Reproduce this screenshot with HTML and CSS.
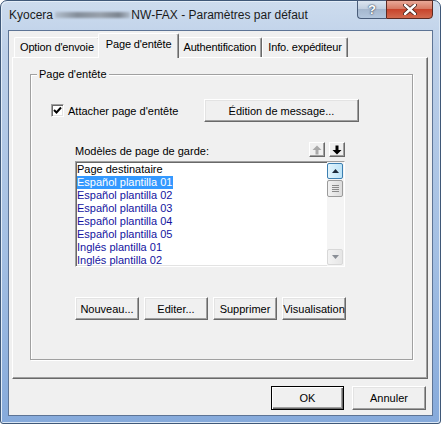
FILE: index.html
```html
<!DOCTYPE html>
<html lang="fr">

<head>
    <meta charset="UTF-8">
    <meta name="viewport" content="width=device-width, initial-scale=1.0">
    <title>Paramètres par défaut</title>
    <link rel="stylesheet" href="styles.css">
</head>

<body>
    <div class="window">
        <div class="titlebar">
            <div class="title">Kyocera <span class="blurred"></span>NW-FAX - Paramètres par défaut</div>
            <div class="caption-btns">
                <span class="cap help">?</span>
                <span class="cap close">
                    <svg width="14" height="11" viewBox="0 0 14 11">
                        <path d="M2 1 L12 10 M12 1 L2 10" stroke="#3b1a14" stroke-width="4" stroke-linecap="round" />
                        <path d="M2 1 L12 10 M12 1 L2 10" stroke="#fff" stroke-width="2.4" stroke-linecap="round" />
                    </svg>
                </span>
            </div>
        </div>

        <div class="client">
            <div class="tabs">
                <div class="tab">Option d'envoie</div>
                <div class="tab active">Page d'entête</div>
                <div class="tab">Authentification</div>
                <div class="tab">Info. expéditeur</div>
            </div>

            <div class="panel">
                <div class="group">
                    <span class="legend">Page d'entête</span>

                    <div class="attach-row">
                        <label class="check">
                            <span class="box">
                                <svg width="9" height="9" viewBox="0 0 9 9">
                                    <path d="M1 4 L3.5 6.5 L8 1.5" fill="none" stroke="#000" stroke-width="2" />
                                </svg>
                            </span>
                            Attacher page d'entête
                        </label>
                        <button class="btn btn-edit" type="button">Édition de message...</button>
                    </div>

                    <div class="list-head">
                        <span>Modèles de page de garde:</span>
                        <span class="move-btns">
                            <span class="move-btn">
                                <svg width="10" height="10" viewBox="0 0 10 10">
                                    <path d="M5 0.5 L9.5 5 L6.5 5 L6.5 9.5 L3.5 9.5 L3.5 5 L0.5 5 Z" fill="#a9a9a9" />
                                </svg>
                            </span>
                            <span class="move-btn">
                                <svg width="10" height="10" viewBox="0 0 10 10">
                                    <path d="M3.5 0.5 L6.5 0.5 L6.5 5 L9.5 5 L5 9.5 L0.5 5 L3.5 5 Z" fill="#000" />
                                </svg>
                            </span>
                        </span>
                    </div>

                    <div class="listbox">
                        <ul class="items">
                            <li class="first">Page destinataire</li>
                            <li><span class="selected">Español plantilla 01</span></li>
                            <li>Español plantilla 02</li>
                            <li>Español plantilla 03</li>
                            <li>Español plantilla 04</li>
                            <li>Español plantilla 05</li>
                            <li>Inglés plantilla 01</li>
                            <li>Inglés plantilla 02</li>
                        </ul>
                        <div class="scrollbar">
                            <span class="sb-btn hover">
                                <svg width="7" height="4" viewBox="0 0 7 4"><path d="M0 4 L3.5 0 L7 4 Z" fill="#1b2a3a" /></svg>
                            </span>
                            <span class="sb-thumb">
                                <i></i><i></i><i></i><i></i>
                            </span>
                            <span class="sb-track"></span>
                            <span class="sb-btn">
                                <svg width="7" height="4" viewBox="0 0 7 4"><path d="M0 0 L7 0 L3.5 4 Z" fill="#8a8f96" /></svg>
                            </span>
                        </div>
                    </div>

                    <div class="list-actions">
                        <button class="btn" type="button">Nouveau...</button>
                        <button class="btn" type="button">Editer...</button>
                        <button class="btn" type="button">Supprimer</button>
                        <button class="btn" type="button">Visualisation</button>
                    </div>
                </div>
            </div>

            <div class="footer">
                <button class="btn default" type="button">OK</button>
                <button class="btn" type="button">Annuler</button>
            </div>
        </div>
    </div>
</body>

</html>
```

FILE: styles.css
```css
* {
    margin: 0;
    padding: 0;
    box-sizing: border-box;
}

body {
    background-color: #fff;
    font-family: "Liberation Sans", Arial, sans-serif;
    font-size: 11px;
    color: #000;
}

/* window frame */

.window {
    width: 441px;
    height: 424px;
    display: flex;
    flex-direction: column;
    border: 1px solid #3f5878;
    border-radius: 7px 7px 3px 3px;
    background: linear-gradient(#cddcee, #bccfe8 12%, #a3bfe3 60%, #86aadb);
    box-shadow: inset 1px 1px 0 #e3edf8, inset -1px -1px 0 #dbe7f5;
}

.titlebar {
    height: 29px;
    display: flex;
    justify-content: space-between;
    align-items: flex-start;
}

.title {
    padding-left: 8px;
    padding-top: 7px;
    font-size: 12px;
    color: #1b1b1b;
    white-space: nowrap;
}

.blurred {
    display: inline-block;
    width: 75px;
    height: 6px;
    margin: 0 1px 2px -1px;
    vertical-align: middle;
    background: linear-gradient(90deg, #b3bfcd, #848e9a 30%, #98a1ac 60%, #7c8590 85%, #b0bccb);
    filter: blur(1px);
}

.caption-btns {
    display: flex;
    margin-top: -1px;
    margin-right: 7px;
}

.cap {
    height: 19px;
    display: flex;
    align-items: center;
    justify-content: center;
    border: 1px solid #4a5d7a;
}

.help {
    width: 29px;
    border-right: none;
    border-radius: 0 0 0 4px;
    background: linear-gradient(#dce5f0, #c1cfe0 45%, #a5b7ce 50%, #b3c6dd);
    color: #fff;
    font-weight: bold;
    font-size: 13px;
    text-shadow: 0 0 2px #2b3b55, 0 0 1px #2b3b55;
}

.close {
    width: 47px;
    border-color: #5c2a22;
    border-radius: 0 0 4px 0;
    background: linear-gradient(#e9a898, #d77a64 45%, #c8442c 50%, #d26a4f);
}

/* client */

.client {
    flex: 1;
    margin: 0 7px 7px 7px;
    background-color: #f0f0f0;
    border: 1px solid #5d7495;
}

.tabs {
    display: flex;
    align-items: flex-end;
    height: 24px;
    margin: 2px 0 0 5px;
}

.tab {
    height: 20px;
    padding: 3px 5px 0 5px;
    white-space: nowrap;
    letter-spacing: -0.15px;
    border-top: 1px solid #fff;
    border-left: 1px solid #fff;
    border-right: 1px solid #696969;
    border-radius: 2px 2px 0 0;
    box-shadow: inset -1px 0 0 #a0a0a0;
    background-color: #f0f0f0;
}

.tab.active {
    position: relative;
    z-index: 1;
    height: 25px;
    margin: 0 -2px -1px -2px;
    padding: 4px 7px 0 7px;
}

.panel {
    width: 416px;
    height: 322px;
    margin-left: 3px;
    padding: 16px 0 0 17px;
    border-top: 1px solid #fff;
    border-left: 1px solid #fff;
    border-right: 1px solid #696969;
    border-bottom: 1px solid #696969;
    box-shadow: inset -1px -1px 0 #a0a0a0;
}

/* group box */

.group {
    position: relative;
    width: 383px;
    height: 286px;
    border: 1px solid #a0a0a0;
    box-shadow: 1px 1px 0 #fff, inset 1px 1px 0 #fff;
}

.legend {
    position: absolute;
    top: -8px;
    left: 6px;
    padding: 0 2px;
    line-height: 14px;
    background-color: #f0f0f0;
}

.attach-row {
    display: flex;
    align-items: center;
    height: 23px;
    margin-top: 24px;
    padding-left: 20px;
    padding-right: 53px;
}

.check {
    display: flex;
    align-items: center;
    gap: 4px;
}

.box {
    width: 13px;
    height: 13px;
    display: flex;
    align-items: center;
    justify-content: center;
    background-color: #fff;
    border-top: 1px solid #a0a0a0;
    border-left: 1px solid #a0a0a0;
    border-right: 1px solid #fff;
    border-bottom: 1px solid #fff;
    box-shadow: inset 1px 1px 0 #696969, inset -1px -1px 0 #e3e3e3;
}

.btn {
    height: 23px;
    font-family: "Liberation Sans", Arial, sans-serif;
    font-size: 11px;
    color: #000;
    background-color: #f0f0f0;
    border-top: 1px solid #fff;
    border-left: 1px solid #fff;
    border-right: 1px solid #696969;
    border-bottom: 1px solid #696969;
    box-shadow: inset -1px -1px 0 #a0a0a0, inset 1px 1px 0 #e3e3e3;
}

.btn-edit {
    width: 155px;
    margin-left: auto;
}

.list-head {
    display: flex;
    justify-content: space-between;
    align-items: flex-end;
    height: 15px;
    margin-top: 20px;
    padding-left: 44px;
    padding-right: 67px;
}

.move-btns {
    display: flex;
    gap: 4px;
}

.move-btn {
    width: 16px;
    height: 15px;
    display: flex;
    align-items: center;
    justify-content: center;
    border-top: 1px solid #fff;
    border-left: 1px solid #fff;
    border-right: 1px solid #696969;
    border-bottom: 1px solid #696969;
    box-shadow: inset -1px -1px 0 #a0a0a0;
}

/* list */

.listbox {
    display: flex;
    width: 270px;
    height: 106px;
    margin: 4px 0 0 44px;
    background-color: #fff;
    border-top: 1px solid #a0a0a0;
    border-left: 1px solid #a0a0a0;
    border-right: 1px solid #fff;
    border-bottom: 1px solid #fff;
    box-shadow: inset 1px 1px 0 #696969, inset -1px -1px 0 #e3e3e3;
    overflow: hidden;
}

.items {
    flex: 1;
    list-style: none;
    padding: 1px 0 0 1px;
    overflow: hidden;
}

.items li {
    height: 13px;
    line-height: 13px;
    color: #1414a0;
    white-space: nowrap;
}

.items li.first {
    color: #000;
}

.selected {
    display: inline-block;
    padding-right: 1px;
    background-color: #3399ff;
    color: #fff;
}

.scrollbar {
    width: 17px;
    display: flex;
    flex-direction: column;
    padding: 1px 1px 1px 0;
    background-color: #f4f4f4;
}

.sb-btn {
    height: 16px;
    display: flex;
    align-items: center;
    justify-content: center;
    border: 1px solid #d8d8d8;
    border-radius: 2px;
    background: linear-gradient(90deg, #f3f3f3, #e6e6e6);
}

.sb-btn.hover {
    border-color: #3c7fb1;
    background: linear-gradient(90deg, #e3f4fc, #bde4f8);
}

.sb-thumb {
    height: 17px;
    margin-top: 1px;
    display: flex;
    flex-direction: column;
    align-items: center;
    justify-content: center;
    gap: 1px;
    border: 1px solid #9b9b9b;
    border-radius: 2px;
    background: linear-gradient(90deg, #f2f2f2, #dcdcdc);
}

.sb-thumb i {
    width: 7px;
    height: 1px;
    background-color: #8a8a8a;
}

.sb-track {
    flex: 1;
}

.list-actions {
    display: flex;
    gap: 5px;
    margin-top: 30px;
    padding-left: 44px;
}

.list-actions .btn {
    width: 64px;
}

/* bottom buttons */

.footer {
    display: flex;
    justify-content: flex-end;
    gap: 8px;
    margin-top: 7px;
    padding-right: 6px;
}

.footer .btn {
    width: 74px;
    height: 24px;
}

.btn.default {
    width: 73px;
    border: 1px solid #000;
    box-shadow: inset 1px 1px 0 #fff, inset -1px -1px 0 #696969, inset -2px -2px 0 #a0a0a0;
}
```
